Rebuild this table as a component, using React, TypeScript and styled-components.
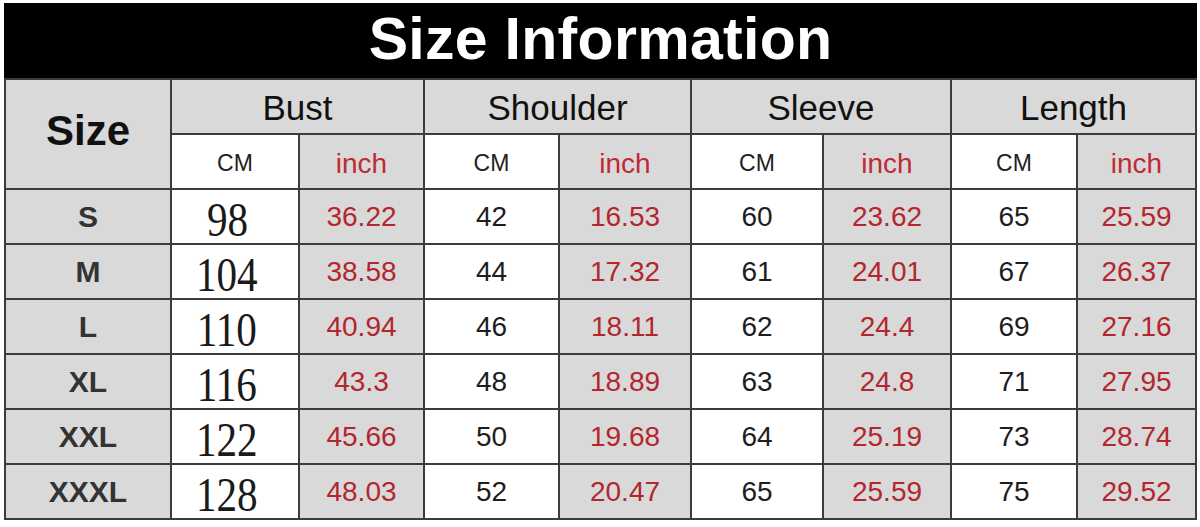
import React, {FC} from 'react';
import styled, {createGlobalStyle} from "styled-components";

const GlobalStyle = createGlobalStyle`
  html, body {
    margin: 0;
    padding: 0;
    background: #ffffff;
  }
  body {
    font-family: "Liberation Sans", Arial, sans-serif;
  }
`;

type Row = {
    size: string;
    bust: [string, string];
    shoulder: [string, string];
    sleeve: [string, string];
    length: [string, string];
};

const rows: Row[] = [
    {size: 'S', bust: ['98', '36.22'], shoulder: ['42', '16.53'], sleeve: ['60', '23.62'], length: ['65', '25.59']},
    {size: 'M', bust: ['104', '38.58'], shoulder: ['44', '17.32'], sleeve: ['61', '24.01'], length: ['67', '26.37']},
    {size: 'L', bust: ['110', '40.94'], shoulder: ['46', '18.11'], sleeve: ['62', '24.4'], length: ['69', '27.16']},
    {size: 'XL', bust: ['116', '43.3'], shoulder: ['48', '18.89'], sleeve: ['63', '24.8'], length: ['71', '27.95']},
    {size: 'XXL', bust: ['122', '45.66'], shoulder: ['50', '19.68'], sleeve: ['64', '25.19'], length: ['73', '28.74']},
    {size: 'XXXL', bust: ['128', '48.03'], shoulder: ['52', '20.47'], sleeve: ['65', '25.59'], length: ['75', '29.52']},
];

const groups = ['Bust', 'Shoulder', 'Sleeve', 'Length'];

export default function App() {
    return (
        <>
            <GlobalStyle/>
            <SizeChart/>
        </>
    );
}

const SizeChart: FC = () => (
    <Wrapper>
        <Title>Size Information</Title>
        <Table>
            <SizeHead>Size</SizeHead>
            {groups.map(g => <GroupHead key={g}>{g}</GroupHead>)}
            {groups.map(g => (
                <React.Fragment key={g + '-units'}>
                    <UnitCell>CM</UnitCell>
                    <UnitCell $inch>inch</UnitCell>
                </React.Fragment>
            ))}
            {rows.map(r => (
                <React.Fragment key={r.size}>
                    <SizeLabel>{r.size}</SizeLabel>
                    <CmCell><SerifNum>{r.bust[0]}</SerifNum></CmCell>
                    <InchCell>{r.bust[1]}</InchCell>
                    <CmCell>{r.shoulder[0]}</CmCell>
                    <InchCell>{r.shoulder[1]}</InchCell>
                    <CmCell>{r.sleeve[0]}</CmCell>
                    <InchCell>{r.sleeve[1]}</InchCell>
                    <CmCell>{r.length[0]}</CmCell>
                    <InchCell>{r.length[1]}</InchCell>
                </React.Fragment>
            ))}
        </Table>
    </Wrapper>
);

const Wrapper = styled.div`
  margin: 3px 0 0 4px;
  width: 1193px;
`;

const Title = styled.div`
  height: 75px;
  background: #000;
  color: #fff;
  display: flex;
  align-items: center;
  justify-content: center;
  font-family: "Liberation Sans", Arial, sans-serif;
  font-weight: bold;
  font-size: 59px;
  letter-spacing: 0.3px;
  padding-bottom: 4px;
  box-sizing: border-box;
`;

const Table = styled.div`
  display: grid;
  grid-template-columns: 164px 126px 123px 133px 130px 130px 126px 124px 117px;
  grid-auto-rows: 53px;
  gap: 2px;
  padding: 0 2px 2px 2px;
  border-top: 2px solid #3c3c3c;
  background: #3c3c3c;
`;

const Cell = styled.div`
  display: flex;
  align-items: center;
  justify-content: center;
  background: #d9d9d9;
  font-family: "Liberation Sans", Arial, sans-serif;
  color: #1e1e1e;
`;

const SizeHead = styled(Cell)`
  grid-row: span 2;
  font-size: 42px;
  font-weight: bold;
  color: #111;
  padding-bottom: 6px;
`;

const GroupHead = styled(Cell)`
  grid-column: span 2;
  font-size: 35px;
  color: #111;
  padding-top: 2px;
`;

const UnitCell = styled(Cell)<{ $inch?: boolean }>`
  background: ${p => p.$inch ? '#d9d9d9' : '#ffffff'};
  color: ${p => p.$inch ? '#bf2a33' : '#222'};
  font-size: ${p => p.$inch ? '28px' : '23px'};
  padding-top: 4px;
`;

const SizeLabel = styled(Cell)`
  font-size: 30px;
  font-weight: bold;
  color: #333;
`;

const CmCell = styled(Cell)`
  background: #ffffff;
  font-size: 28px;
  color: #1e1e1e;
`;

const InchCell = styled(Cell)`
  font-size: 28px;
  color: #b3262d;
`;

const SerifNum = styled.span`
  display: inline-block;
  font-family: "Liberation Serif", "Times New Roman", serif;
  font-size: 49px;
  color: #1a1a1a;
  transform: scaleX(0.84);
  margin: 6px 16px 0 0;
`;
